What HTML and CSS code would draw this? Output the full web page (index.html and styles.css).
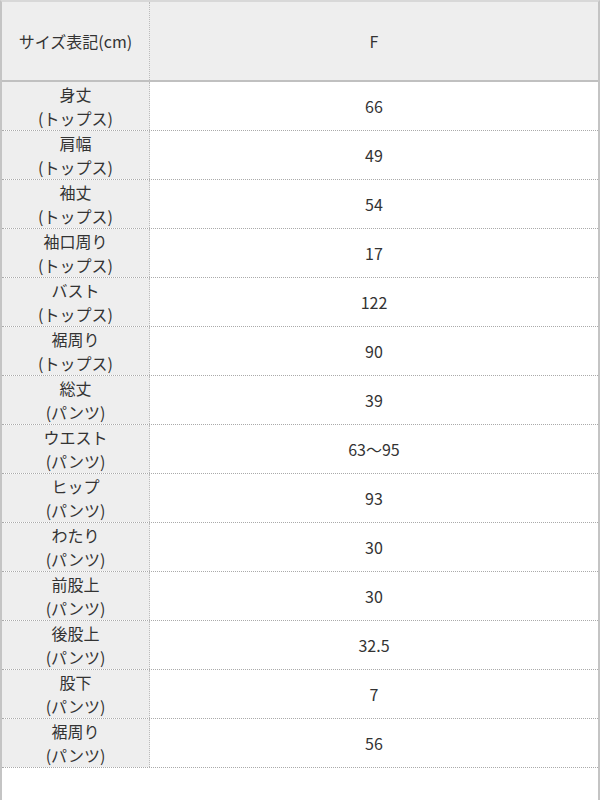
FILE: index.html
```html
<!DOCTYPE html>
<html lang="ja">
<head>
<meta charset="utf-8">
<link rel="stylesheet" href="styles.css">
</head>
<body>
<div class="frame">
  <div class="row head">
    <div class="label">サイズ表記(cm)</div>
    <div class="value">F</div>
  </div>
  <div class="row"><div class="label">身丈<br>(トップス)</div><div class="value">66</div></div>
  <div class="row"><div class="label">肩幅<br>(トップス)</div><div class="value">49</div></div>
  <div class="row"><div class="label">袖丈<br>(トップス)</div><div class="value">54</div></div>
  <div class="row"><div class="label">袖口周り<br>(トップス)</div><div class="value">17</div></div>
  <div class="row"><div class="label">バスト<br>(トップス)</div><div class="value">122</div></div>
  <div class="row"><div class="label">裾周り<br>(トップス)</div><div class="value">90</div></div>
  <div class="row"><div class="label">総丈<br>(パンツ)</div><div class="value">39</div></div>
  <div class="row"><div class="label">ウエスト<br>(パンツ)</div><div class="value">63～95</div></div>
  <div class="row"><div class="label">ヒップ<br>(パンツ)</div><div class="value">93</div></div>
  <div class="row"><div class="label">わたり<br>(パンツ)</div><div class="value">30</div></div>
  <div class="row"><div class="label">前股上<br>(パンツ)</div><div class="value">30</div></div>
  <div class="row"><div class="label">後股上<br>(パンツ)</div><div class="value">32.5</div></div>
  <div class="row"><div class="label">股下<br>(パンツ)</div><div class="value">7</div></div>
  <div class="row"><div class="label">裾周り<br>(パンツ)</div><div class="value">56</div></div>
</div>
</body>
</html>
```
FILE: styles.css
```css
html, body {
  margin: 0;
  padding: 0;
  background: #fff;
}
body {
  font-family: "Noto Sans CJK JP", "Noto Sans", sans-serif;
  font-size: 16px;
  color: #333;
}
.frame {
  box-sizing: border-box;
  width: 600px;
  height: 800px;
  border-left: 2px solid #c4c4c4;
  border-right: 2px solid #c4c4c4;
  border-top: 2px solid #d8d8d8;
}
.row {
  display: grid;
  grid-template-columns: 148px 1fr;
  height: 49px;
  box-sizing: border-box;
  border-bottom: 1px dotted #aaa;
}
.row.head {
  height: 80px;
  background: #eeeeee;
  border-bottom: 2px solid #c0c0c0;
}
.label {
  display: flex;
  align-items: center;
  justify-content: center;
  text-align: center;
  background: #eeeeee;
  border-right: 1px dotted #bbb;
  line-height: 24px;
}
.value {
  display: flex;
  align-items: center;
  justify-content: center;
}
```
